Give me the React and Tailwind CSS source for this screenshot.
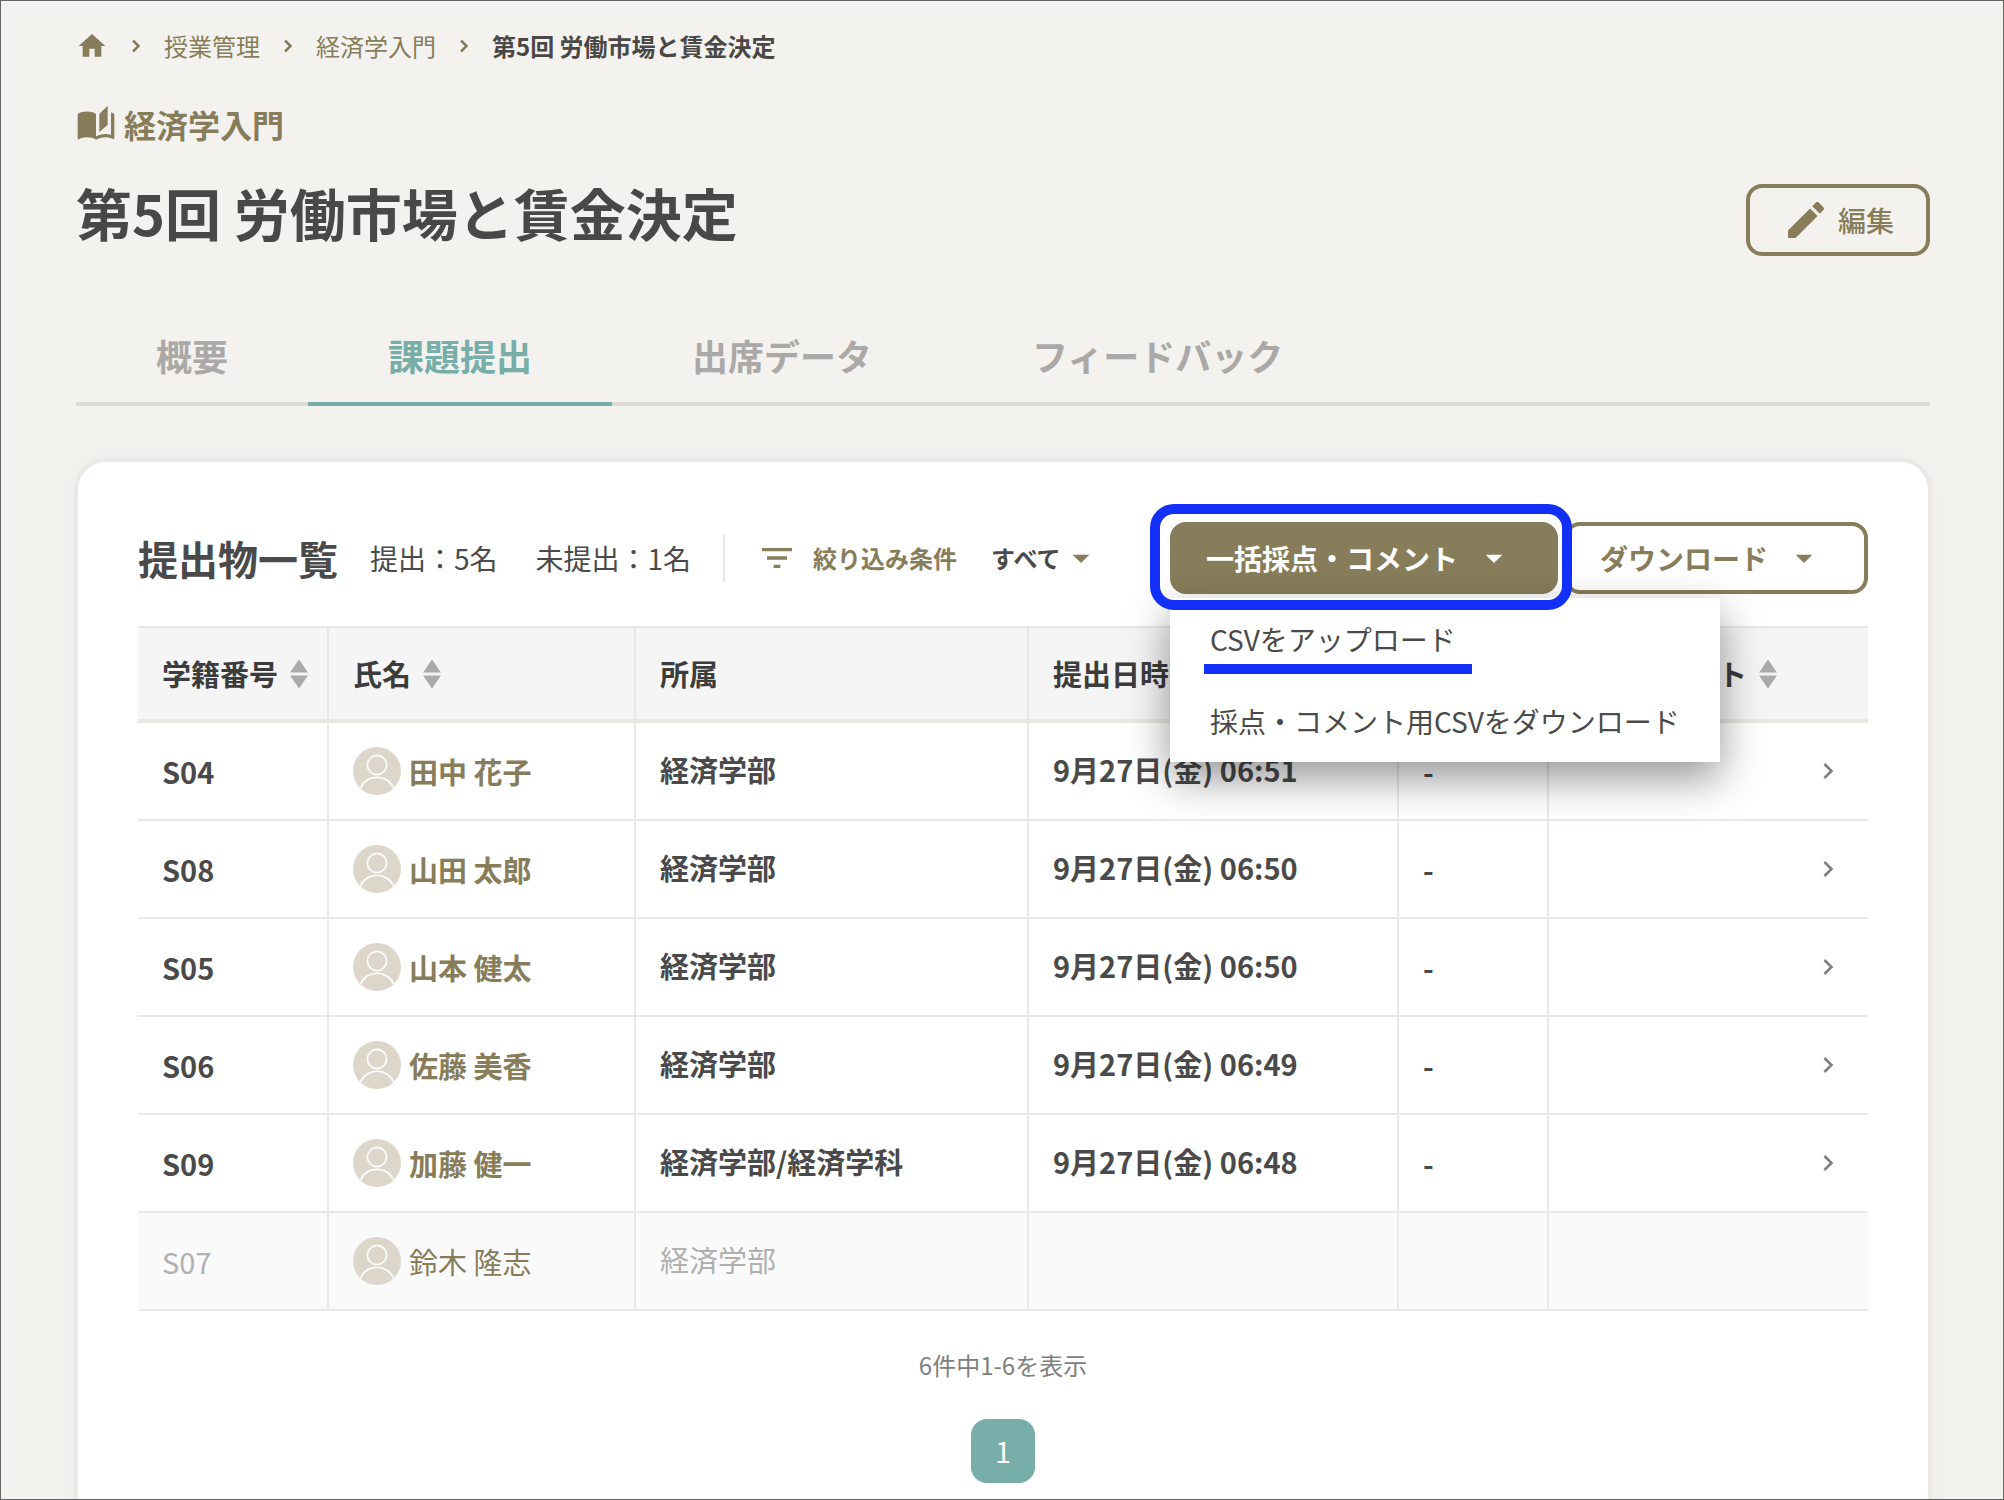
import {
  MdArrowDropDown,
  MdAutoStories,
  MdChevronRight,
  MdEdit,
  MdFilterList,
  MdHome,
} from "react-icons/md";

const submissions = [
  { id: "S04", name: "田中 花子", dept: "経済学部", date: "9月27日(金) 06:51", score: "-" },
  { id: "S08", name: "山田 太郎", dept: "経済学部", date: "9月27日(金) 06:50", score: "-" },
  { id: "S05", name: "山本 健太", dept: "経済学部", date: "9月27日(金) 06:50", score: "-" },
  { id: "S06", name: "佐藤 美香", dept: "経済学部", date: "9月27日(金) 06:49", score: "-" },
  { id: "S09", name: "加藤 健一", dept: "経済学部/経済学科", date: "9月27日(金) 06:48", score: "-" },
  { id: "S07", name: "鈴木 隆志", dept: "経済学部" },
];

const columns = [
  { label: "学籍番号", sortable: true, width: "w-[191px]" },
  { label: "氏名", sortable: true, width: "w-[307px]" },
  { label: "所属", width: "w-[393px]" },
  { label: "提出日時", sortable: true, width: "w-[370px]" },
  { label: "点数", sortable: true, width: "w-[150px]" },
  { label: "教員コメント", sortable: true, width: "" },
];

const tabs = ["概要", "課題提出", "出席データ", "フィードバック"];

function SortIcon() {
  return (
    <svg width="18" height="30" viewBox="0 0 18 30" fill="#aaaaaa" aria-hidden="true" className="shrink-0">
      <path d="M9 0.5 18 13.5H0z" />
      <path d="M0 16.5h18L9 29.5z" />
    </svg>
  );
}

function Separator() {
  return (
    <svg width="24" height="24" viewBox="0 0 24 24" fill="none" stroke="currentColor" strokeWidth="2.5" aria-hidden="true">
      <path d="M9 6.500 14.500 12 9 17.500" />
    </svg>
  );
}

function Avatar() {
  return (
    <svg width="48" height="48" viewBox="0 0 48 48" fill="none" aria-hidden="true">
      <circle cx="24" cy="24" r="24" fill="#ddd7cb" />
      <g stroke="#ffffff" strokeWidth="1.6">
        <circle cx="24" cy="18" r="9.6" />
        <path d="M7.5 41C10 34.5 16.5 30.300 24 30.300s14 4.200 16.500 10.700" />
      </g>
    </svg>
  );
}

function Breadcrumb() {
  return (
    <nav aria-label="パンくず" className="flex h-9 items-center gap-4 text-2xl text-[#877d5a]">
      <a href="#home" aria-label="ホーム">
        <MdHome size={32} />
      </a>
      <Separator />
      <a href="#classes">授業管理</a>
      <Separator />
      <a href="#course">経済学入門</a>
      <Separator />
      <span className="font-bold text-[#4a4846]">第5回 労働市場と賃金決定</span>
    </nav>
  );
}

function BulkMenu() {
  return (
    <div className="relative">
      <button
        type="button"
        aria-expanded="true"
        className="flex h-[72px] items-center gap-4 rounded-2xl border-4 border-[#877d5a] bg-[#877d5a] pl-8 pr-10 text-[28px] font-bold text-white"
      >
        一括採点・コメント
        <MdArrowDropDown size={40} />
      </button>
      <ul className="absolute left-0 top-[76px] z-10 whitespace-nowrap bg-white text-[28px] text-[#4a4a4a] shadow-[0_16px_40px_rgba(0,0,0,0.42)]">
        <li className="relative">
          <a href="#upload" className="flex h-[82px] items-center px-10">
            CSVをアップロード
          </a>
          <span className="absolute bottom-1.5 left-[34px] h-2.5 w-[268px] bg-[#1330f8]" />
        </li>
        <li>
          <a href="#template" className="flex h-[82px] items-center px-10">
            採点・コメント用CSVをダウンロード
          </a>
        </li>
      </ul>
      <span className="pointer-events-none absolute -bottom-4 -left-5 -right-3.5 -top-[18px] z-20 rounded-3xl border-10 border-[#1330f8]" />
    </div>
  );
}

function Toolbar() {
  return (
    <div className="flex items-center justify-between">
      <div className="flex items-center gap-8 text-[28px] text-[#4a4a4a]">
        <h2 className="text-[40px] font-bold">提出物一覧</h2>
        <div className="flex gap-[38px]">
          <span>提出：5名</span>
          <span>未提出：1名</span>
        </div>
        <div className="flex h-12 items-center border-l-2 border-[#e8e9e3] pl-8">
          <MdFilterList size={40} className="text-[#877d5a]" />
          <label htmlFor="filter" className="ml-4 text-2xl font-bold text-[#877d5a]">
            絞り込み条件
          </label>
          <div className="relative ml-[34px] flex items-center">
            <select id="filter" className="h-10 appearance-none bg-transparent pr-[30px] text-2xl font-bold">
              <option>すべて</option>
            </select>
            <MdArrowDropDown size={40} className="pointer-events-none absolute -right-2 top-0 text-[#877d5a]" />
          </div>
        </div>
      </div>
      <div className="flex gap-1.5">
        <BulkMenu />
        <button
          type="button"
          className="flex h-[72px] items-center gap-4 rounded-2xl border-4 border-[#877d5a] bg-white pl-8 pr-10 text-[28px] font-bold text-[#877d5a]"
        >
          ダウンロード
          <MdArrowDropDown size={40} />
        </button>
      </div>
    </div>
  );
}

function SubmissionTable() {
  return (
    <table className="mt-8 w-full table-fixed border-separate border-spacing-0 text-left text-[29px] text-[#4a4a4a]">
      <thead>
        <tr className="bg-[#f5f5f5]">
          {columns.map((col) => (
            <th
              key={col.label}
              className={`h-[97px] border-b-4 border-r-2 border-t-2 border-[#e7e8e2] px-6 font-bold text-[#3c3c3c] last:border-r-0 ${col.width}`}
            >
              <div className="flex items-center gap-3 whitespace-nowrap">
                {col.label}
                {col.sortable && <SortIcon />}
              </div>
            </th>
          ))}
        </tr>
      </thead>
      <tbody>
        {submissions.map((row) => {
          const done = Boolean(row.date);
          return (
            <tr
              key={row.id}
              className={
                done
                  ? "font-bold *:border-b-2 *:border-r-2 *:border-[#e9e9e7] *:last:border-r-0"
                  : "bg-[#fafafa] text-[#b0b0b0] *:border-b-2 *:border-r-2 *:border-[#e9e9e7] *:last:border-r-0"
              }
            >
              <td className="h-[98px] px-6 pt-0.5">{row.id}</td>
              <td className="px-6">
                <a href={`#${row.id}`} className="flex items-center gap-2 text-[#877d5a]">
                  <Avatar />
                  <span className="pt-0.5">{row.name}</span>
                </a>
              </td>
              <td className="px-6 pb-0.5">{row.dept}</td>
              <td className="px-6 pb-0.5">{row.date}</td>
              <td className="px-6 pt-0.5">{row.score}</td>
              <td className="px-6">
                {done && <MdChevronRight size={32} className="ml-auto text-[#808080]" />}
              </td>
            </tr>
          );
        })}
      </tbody>
    </table>
  );
}

export default function App() {
  return (
    <div
      lang="ja"
      className="h-screen overflow-hidden border border-[#666464] bg-[#f3f2ee] pl-[75px] pr-[73px] pt-[27px] font-['Noto_Sans_CJK_JP',sans-serif]"
    >
      <Breadcrumb />

      <header>
        <p className="mt-10 flex h-10 items-center gap-2 text-[32px] font-bold text-[#877d5a]">
          <MdAutoStories size={40} />
          経済学入門
        </p>
        <div className="mt-8 flex items-start justify-between">
          <h1 className="text-[56px] font-bold leading-[72px] text-[#4a4846]">第5回 労働市場と賃金決定</h1>
          <button
            type="button"
            className="mt-2 flex h-[72px] items-center gap-2 rounded-2xl border-4 border-[#877d5a] px-8 text-[28px] font-medium text-[#877d5a]"
          >
            <MdEdit size={48} />
            編集
          </button>
        </div>
      </header>

      <nav className="mt-[52px] flex border-b-4 border-[#dbdad6]">
        {tabs.map((tab) => (
          <a
            key={tab}
            href={`#${tab}`}
            className={
              tab === "課題提出"
                ? "-mb-1 flex h-[98px] items-center border-b-4 border-[#78aea9] px-20 text-4xl font-bold text-[#78aea9]"
                : "-mb-1 flex h-[98px] items-center border-b-4 border-transparent px-20 text-4xl font-bold text-[#aaa9a7]"
            }
          >
            {tab}
          </a>
        ))}
      </nav>

      <main className="mt-[54px] rounded-[30px] border-2 border-[#ebeae6] bg-white px-15 pb-20 pt-15 shadow-[0_0_0_2px_#e9e8e4,0_0_24px_rgba(0,0,0,0.03)]">
        <Toolbar />
        <SubmissionTable />
        <p className="mt-9 text-center text-2xl leading-9 text-[#808080]">6件中1-6を表示</p>
        <div className="mt-9 flex justify-center">
          <button type="button" className="size-16 rounded-2xl bg-[#78aea9] text-[28px] text-white">
            1
          </button>
        </div>
      </main>
    </div>
  );
}
